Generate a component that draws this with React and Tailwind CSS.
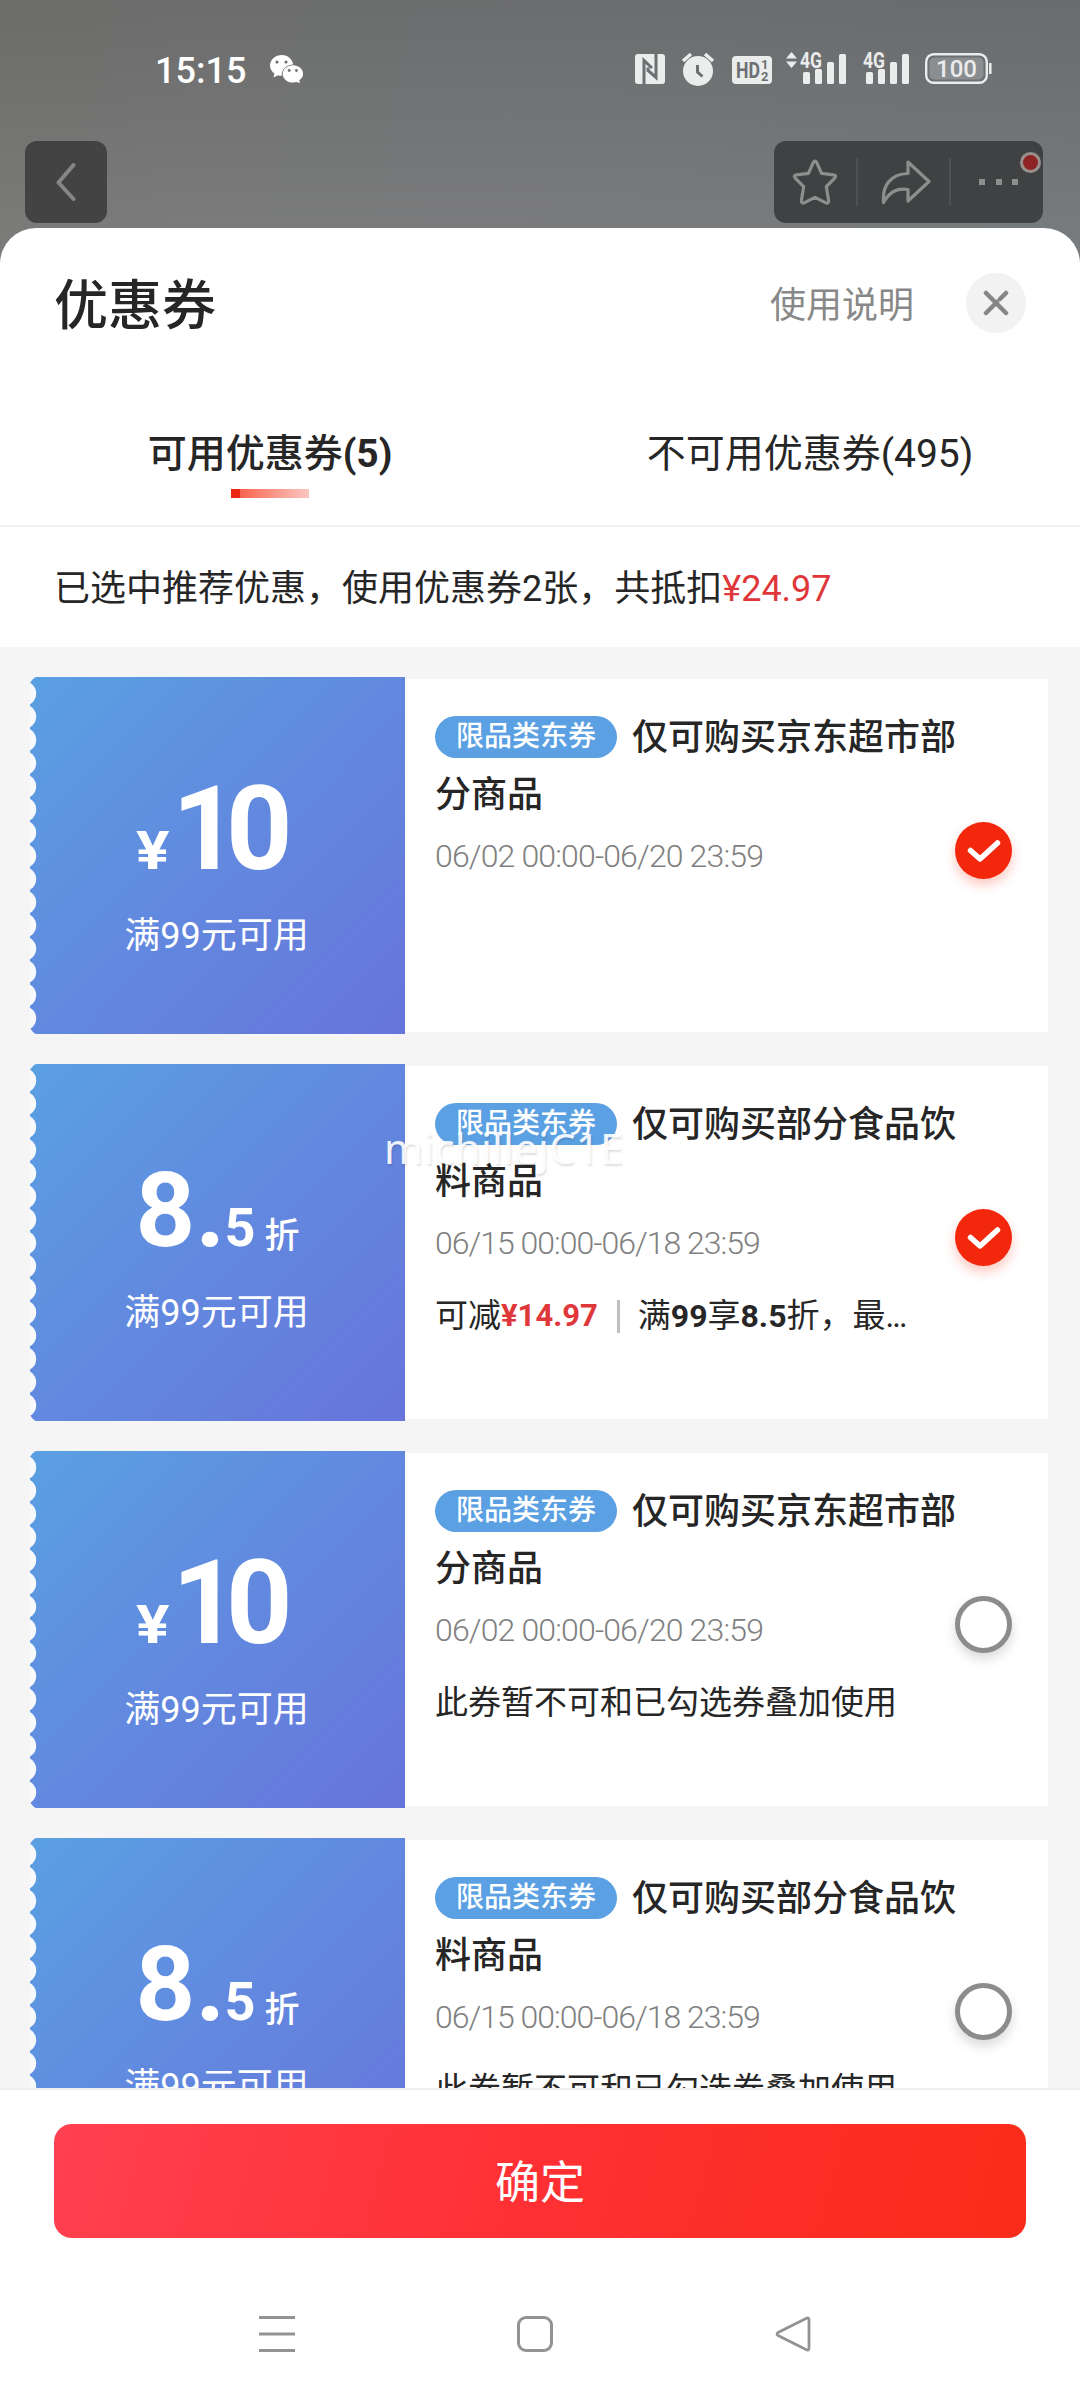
const COUPONS = [
    { id: 1, type: "cash", value: "10", title: "仅可购买京东超市部分商品", time: "06/02 00:00-06/20 23:59", checked: true },
    { id: 2, type: "discount", value: "8", decimal: "5", title: "仅可购买部分食品饮料商品", time: "06/15 00:00-06/18 23:59", checked: true, saving: "¥14.97" },
    { id: 3, type: "cash", value: "10", title: "仅可购买京东超市部分商品", time: "06/02 00:00-06/20 23:59", checked: false },
    { id: 4, type: "discount", value: "8", decimal: "5", title: "仅可购买部分食品饮料商品", time: "06/15 00:00-06/18 23:59", checked: false },
];

const App = () => {
    return (
        <div className="relative flex h-[2400px] w-[1080px] flex-col overflow-hidden bg-[linear-gradient(180deg,rgba(0,0,0,0.03)_0px,rgba(255,255,255,0.09)_260px),linear-gradient(100deg,#6f706d_0%,#6f7072_35%,#696f71_100%)] font-['Roboto','Noto_Sans_CJK_SC',sans-serif] text-[#262626]">
            <div className="flex h-[228px] shrink-0 flex-col">
                <StatusBar />
                <TopBar />
            </div>
            <div className="flex grow flex-col rounded-t-[36px] bg-white">
                <SheetHeader />
                <Tabs />
                <p className="h-[120px] shrink-0 pl-[54px] text-[36px] leading-[125px]">
                    已选中推荐优惠，使用优惠券2张，共抵扣<span className="text-[#e0383a]">¥24.97</span>
                </p>
                <div className="flex h-[1441px] shrink-0 flex-col gap-[30px] overflow-hidden bg-[#f5f5f5] pt-[30px] pr-8 pl-[30px]">
                    {COUPONS.map((coupon) => (
                        <Coupon key={coupon.id} coupon={coupon} />
                    ))}
                </div>
                <div className="shrink-0 border-t-2 border-[#eeeeee] px-[54px] pt-[34px]">
                    <button className="flex h-[114px] w-full items-center justify-center rounded-[18px] bg-[linear-gradient(105deg,#ff4050_0%,#ff3033_50%,#fa2c19_100%)] pt-1.5 text-[45px] text-white">
                        确定
                    </button>
                </div>
                <NavBar />
            </div>
            {/* Watermark */}
            <span className="absolute top-[1120px] left-[384px] font-['Noto_Sans'] text-[42px] leading-[56px] tracking-[0.2px] text-white/90 [text-shadow:1px_2px_2px_rgba(0,0,0,0.12)]">
                michillejC1E
            </span>
        </div>
    );
};

const StatusBar = () => (
    <div className="flex h-[141px] items-start pt-[52px] pl-[155px] text-white">
        <span className="w-[115px] pt-px text-[36px] leading-9 font-medium">15:15</span>
        <svg width="34" height="28" viewBox="0 0 34 28" className="mt-[3px]" fill="#fff">
            <path d="M12 0C5.400 0 0 4.600 0 10.600c0 3.300 1.800 6.200 4.500 8.200L3.400 22.500l4.400-2.300c1.200.4 2.500.6 4 .6C11.200 14.500 16 9.600 23.200 9.400 22.300 4 17.600 0 12 0z" />
            <path d="M23 10.300c-5.800 0-10.300 3.900-10.300 8.700s4.500 8.600 10.300 8.600c1.200 0 2.400-.2 3.500-.5L30 28l-.8-2.700c2.400-1.500 3.900-3.800 3.900-6.300 0-4.800-4.400-8.700-10.100-8.700z" />
            <g fill="#6f7071">
                <circle cx="7" cy="7" r="1.600" />
                <circle cx="16" cy="7" r="1.600" />
                <circle cx="19.200" cy="15.500" r="1.400" />
                <circle cx="26.400" cy="15.500" r="1.400" />
            </g>
        </svg>
        <div className="ml-[331px] flex">
            <svg width="30" height="36" viewBox="0 0 30 36">
                <rect y="2" width="30" height="30" rx="3" fill="#ebecec" />
                <path d="M9 32V8.500l8 7.500M21 2v23.500l-8-7v-3" fill="none" stroke="#6c7072" strokeWidth="3" />
            </svg>
            <svg width="34" height="36" viewBox="0 0 34 36" className="ml-4">
                <circle cx="17" cy="19" r="15" fill="#ebecec" />
                <path d="M2 9l8-7M32 9l-8-7" stroke="#ebecec" strokeWidth="3.500" />
                <path d="M16.500 13v7l5 4.500" fill="none" stroke="#6c7072" strokeWidth="3" />
            </svg>
            <svg width="40" height="36" viewBox="0 0 40 36" className="ml-[17px]">
                <rect y="4" width="40" height="28" rx="4" fill="#ebecec" />
                <g fill="#6c7072" fontWeight="700">
                    <text x="4" y="26" fontSize="22" textLength="24" lengthAdjust="spacingAndGlyphs">HD</text>
                    <text x="29" y="17" fontSize="13">1</text>
                    <text x="29" y="28.500" fontSize="13">2</text>
                </g>
            </svg>
            <svg width="11" height="36" viewBox="0 0 11 36" fill="#ebecec" className="ml-[14px]">
                <path d="M0 6.500L5.500 0 11 6.500zM0 9.500h11L5.500 16z" />
            </svg>
            <Signal className="ml-[3px] overflow-visible" />
            <Signal className="ml-[17px] overflow-visible" />
            <svg width="68" height="36" viewBox="0 0 68 36" className="ml-4">
                <rect x="1.200" y="2.200" width="60.600" height="28.600" rx="7.500" fill="none" stroke="#ebecec" strokeWidth="2.400" />
                <rect x="4.500" y="5.500" width="54" height="22" rx="5" fill="#8b8e90" />
                <path d="M65.300 11v11" stroke="#ebecec" strokeWidth="2.500" />
                <text x="31.500" y="25" fontSize="24" fontWeight="500" fill="#ebecec" textAnchor="middle">100</text>
            </svg>
        </div>
    </div>
);

const Signal = ({ className }) => (
    <svg width="46" height="36" viewBox="0 0 46 36" fill="#ebecec" className={className}>
        <text x="0" y="16" fontSize="22" fontWeight="700" textLength="22" lengthAdjust="spacingAndGlyphs">4G</text>
        <rect x="3" y="20" width="7" height="12" rx="1.500" />
        <rect x="15" y="17" width="7" height="15" rx="1.500" />
        <rect x="27" y="10" width="7" height="22" rx="1.500" />
        <rect x="39" y="2" width="7" height="30" rx="1.500" />
    </svg>
);

const TopBar = () => (
    <div className="flex justify-between pr-[37px] pl-[25px]">
        <div className="flex h-[82px] w-[82px] items-center justify-center rounded-xl bg-[#424342]">
            <svg width="20" height="40" viewBox="0 0 20 40" fill="none" stroke="#868686" strokeWidth="4" strokeLinecap="round" strokeLinejoin="round">
                <path d="M17.500 3L2.500 20.500 17.500 37" />
            </svg>
        </div>
        <div className="relative flex h-[82px] w-[269px] items-center rounded-xl bg-[#404142] text-[#8d8e8e]">
            <svg width="46" height="46" viewBox="0 0 46 46" fill="none" stroke="currentColor" strokeWidth="3.200" strokeLinejoin="round" className="ml-[18px]">
                <path d="M21.300 3.500Q23 .5 24.700 3.500L29.600 14.300 41.500 15.800Q45 16.500 42.500 19.300L34.300 27.600 36.600 41.500Q36.700 45 33.500 43.700L23 38.300 12.500 43.700Q9.300 45 9.400 41.500L11.700 27.600 3.500 19.300Q1 16.500 4.500 15.800L16.400 14.300z" />
            </svg>
            <div className="ml-[18px] h-12 w-0.5 bg-[#4f5051]" />
            <svg width="50" height="46" viewBox="0 0 50 46" fill="none" stroke="currentColor" strokeWidth="3.200" strokeLinejoin="round" className="ml-[23px]">
                <path d="M27 3L48 22.500 27 42V30.500C15.500 29 8.500 33 2.500 43.500 1 26 10 15 27 14.500z" />
            </svg>
            <div className="ml-[18px] h-12 w-0.5 bg-[#4f5051]" />
            <div className="ml-7 flex gap-[10.500px]">
                <span className="h-1.5 w-1.5 bg-[#8d8e8e]" />
                <span className="h-1.5 w-1.5 bg-[#8d8e8e]" />
                <span className="h-1.5 w-1.5 bg-[#8d8e8e]" />
            </div>
            <span className="absolute top-[11px] right-0.5 h-[21px] w-[21px] rounded-full border-3 border-[#998f8d] bg-[#8e2323]" />
        </div>
    </div>
);

const SheetHeader = () => (
    <div className="flex h-[150px] shrink-0 items-center pr-[54px] pl-[54px]">
        <h1 className="grow pt-2 text-[54px] leading-[60px] font-medium">优惠券</h1>
        <span className="pt-[5px] text-[36px]/[50px] text-[#888888]">使用说明</span>
        <span className="ml-[52px] flex h-[60px] w-[60px] items-center justify-center rounded-full bg-[#f2f2f2]">
            <svg width="26" height="26" viewBox="0 0 26 26" stroke="#868686" strokeWidth="4.500" strokeLinecap="round">
                <path d="M3 3l20 20M23 3l-6 6M14 12L3 23" />
            </svg>
        </span>
    </div>
);

const Tabs = () => (
    <div className="flex h-[149px] shrink-0 border-b-2 border-[#f2f2f2] text-[39px] leading-[54px]">
        <div className="flex w-[540px] flex-col items-center pt-[49px]">
            <span className="font-medium">可用优惠券<b>(5)</b></span>
            <span className="mt-2 flex h-[9px] w-[78px] bg-linear-to-r from-[#f4503c] to-[#fac6c2]">
                <i className="h-[9px] w-[9px] bg-[#ea2710]" />
            </span>
        </div>
        <div className="flex w-[540px] justify-center pt-[49px]">不可用优惠券(495)</div>
    </div>
);

const Coupon = ({ coupon }) => (
    <div className="flex h-[357px] shrink-0 items-center">
        <div className="relative flex h-full w-[375px] flex-col items-center bg-[linear-gradient(135deg,#5aa0e2_0%,#6288df_52%,#6775da_100%)] text-white">
            <Scallops />
            {coupon.type === "cash" ? (
                <div className="mt-[77px] flex h-[150px] items-baseline pr-[19px] font-bold">
                    <span className="w-9 origin-left scale-x-118 text-[53px]">¥</span>
                    <span className="text-[116px] leading-[150px] tracking-[-12.600px]">{coupon.value}</span>
                </div>
            ) : (
                <div className="mt-[78px] flex h-[150px] items-baseline">
                    <span className="text-[104px] leading-[138px] font-bold">{coupon.value}.</span>
                    <span className="-ml-px text-[54px] font-bold">{coupon.decimal}</span>
                    <span className="ml-[9px] translate-y-0.5 text-[35px] font-medium">折</span>
                </div>
            )}
            <span className={coupon.type === "cash" ? "mt-[7px] pr-0.5 text-[36px] leading-[50px]" : "-mt-1 pr-0.5 text-[36px] leading-[50px]"}>满99元可用</span>
        </div>
        <div className="flex h-[353px] w-[643px] items-start bg-white pt-[31px] pl-[30px]">
            <div className="w-[520px]">
                <div className="h-[115px] w-[530px] text-[36px] leading-[57px] font-medium">
                    <span className="mr-[15px] inline-flex h-[42px] w-[182px] items-center justify-center rounded-full bg-[#5aa0e2] align-[4px] text-[28px] leading-[42px] text-white">
                        限品类东券
                    </span>
                    {coupon.title}
                </div>
                <p className={coupon.type === "cash" ? "mt-2.5 text-[32px] leading-[42px] font-light tracking-[-0.850px] whitespace-nowrap text-[#808080]" : "mt-2.5 text-[32px] leading-[42px] font-light tracking-[-1px] whitespace-nowrap text-[#808080]"}>
                    {coupon.time}
                </p>
                <CouponNote coupon={coupon} />
            </div>
            <CheckCircle checked={coupon.checked} />
        </div>
    </div>
);

const CouponNote = ({ coupon }) => {
    if (coupon.saving) {
        return (
            <p className="mt-[30px] flex items-center text-[33px] leading-[44px] whitespace-nowrap">
                可减<b className="text-[31px] text-[#e0383a]">{coupon.saving}</b>
                <i className="mr-[18px] ml-[19px] h-[33px] w-[3px] bg-[#bfbfbf]" />
                满<b className="text-[32px]">99</b>享<b className="text-[32px]">8.5</b>折，最<span className="tracking-[-2px]">...</span>
            </p>
        );
    }
    if (!coupon.checked) {
        return <p className="mt-[30px] text-[33px] leading-[44px] whitespace-nowrap">此券暂不可和已勾选券叠加使用</p>;
    }
    return null;
};

const CheckCircle = ({ checked }) =>
    checked ? (
        <span className="mt-[112px] flex h-[57px] w-[57px] items-center justify-center rounded-full bg-[#f2270c] shadow-[0_6px_12px_rgba(242,39,12,0.25)]">
            <svg width="34" height="24" viewBox="0 0 34 24" fill="none" stroke="#fff" strokeWidth="5.500" strokeLinecap="round" strokeLinejoin="round">
                <path d="M3.500 11.500l9.500 8.500L30.500 4" />
            </svg>
        </span>
    ) : (
        <span className="mt-[112px] h-[57px] w-[57px] rounded-full border-5 border-[#8c8c8c] bg-white shadow-[0_6px_12px_rgba(0,0,0,0.15)]" />
    );

// Perforated left edge of the ticket
const Scallops = () => (
    <svg width="7" height="357" viewBox="0 0 7 357" className="absolute top-0 left-0" fill="#f8f9fb">
        <path d="M0 0h6Q3 1 0 6zM0 357h6Q3 356 0 351z" fill="#f5f5f5" />
        {Array.from({ length: 15 }, (_, i) => (
            <circle key={i} cx="-6" cy={16.5 + i * 23.2} r="12.200" />
        ))}
    </svg>
);

const NavBar = () => (
    <div className="flex pt-[78px] pl-[259px]">
        <svg width="36" height="36" viewBox="0 0 36 36" stroke="#939393" strokeWidth="3">
            <path d="M0 1.500h36M0 18h36M0 34.500h36" />
        </svg>
        <span className="ml-[222px] h-9 w-9 rounded-[9px] border-3 border-[#939393]" />
        <svg width="36" height="36" viewBox="0 0 36 36" fill="none" stroke="#939393" strokeWidth="2.800" strokeLinejoin="round" className="ml-[222px]">
            <path d="M31 2.500Q34 1 34 4V32Q34 35 31 33.500L3 19.500Q1 18 3 16.500z" />
        </svg>
    </div>
);

export default App;
